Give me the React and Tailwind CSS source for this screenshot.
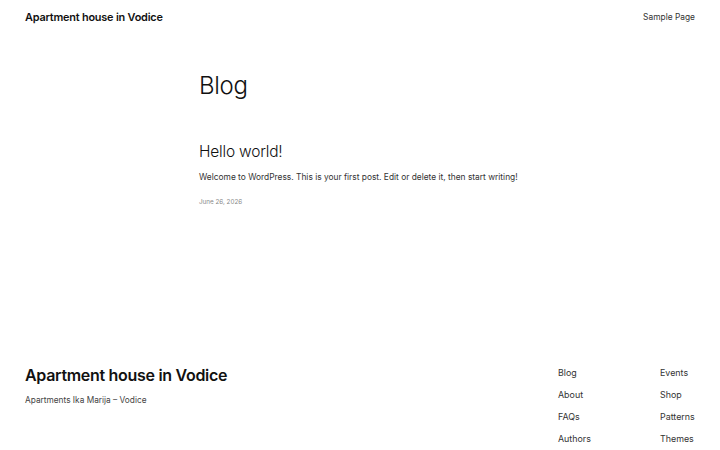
export default function App() {
  const navLeft = ['Blog', 'About', 'FAQs', 'Authors'];
  const navRight = ['Events', 'Shop', 'Patterns', 'Themes'];

  return (
    <div className="w-[720px] h-[450px] bg-white text-[#111111] flex flex-col overflow-hidden" style={{ fontFamily: 'Inter, "Noto Sans", sans-serif' }}>
      {/* Header */}
      <header className="h-[35px] px-[25px] flex items-center justify-between">
        <span className="text-[10.9px] font-semibold tracking-[-0.2px]">Apartment house in Vodice</span>
        <span className="text-[8.4px] text-[#333]">Sample Page</span>
      </header>

      {/* Main */}
      <main className="flex-1 pl-[199px]">
        <h1 className="mt-[39px] text-[24px] font-light leading-none tracking-[-0.3px]">Blog</h1>
        <article className="mt-[46px]">
          <h2 className="text-[15.5px] font-light leading-none tracking-[-0.2px]">Hello world!</h2>
          <p className="mt-[13px] text-[8.4px] text-[#333] leading-none">
            Welcome to WordPress. This is your first post. Edit or delete it, then start writing!
          </p>
          <p className="mt-[18px] text-[6.3px] text-[#888] leading-none">June 26, 2026</p>
        </article>
      </main>

      {/* Footer */}
      <footer className="px-[25px] pb-[6.5px] flex justify-between">
        <div className="pt-[0.5px]">
          <div className="text-[16px] font-semibold leading-none tracking-[-0.3px]">Apartment house in Vodice</div>
          <div className="mt-[13px] text-[8.3px] text-[#444] leading-none">Apartments Ika Marija – Vodice</div>
        </div>
        <div className="flex text-[8.9px] text-[#333]">
          <ul className="w-[102px] flex flex-col gap-[11px] leading-[11px]">
            {navLeft.map((n) => <li key={n}>{n}</li>)}
          </ul>
          <ul className="w-[35px] flex flex-col gap-[11px] leading-[11px]">
            {navRight.map((n) => <li key={n}>{n}</li>)}
          </ul>
        </div>
      </footer>
    </div>
  );
}
